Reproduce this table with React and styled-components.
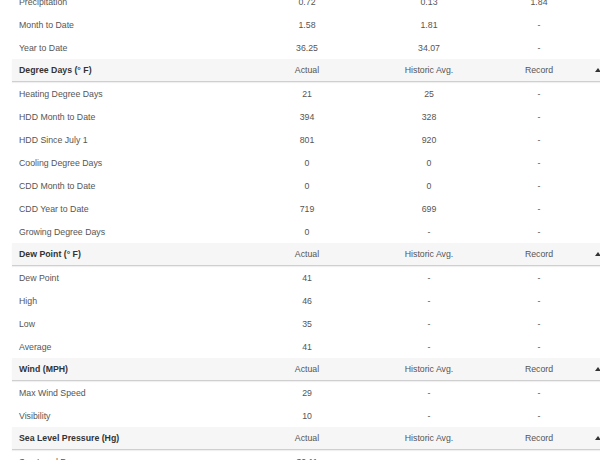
import styled, { createGlobalStyle } from 'styled-components'

const GlobalStyle = createGlobalStyle`
	html, body {
		margin: 0;
		padding: 0;
		background: #fff;
		overflow: hidden;
	}
	body {
		font-family: 'Liberation Sans', Arial, sans-serif;
	}
`

const secciones = [
	{
		titulo: null,
		filas: [
			['Precipitation', '0.72', '0.13', '1.84'],
			['Month to Date', '1.58', '1.81', '-'],
			['Year to Date', '36.25', '34.07', '-'],
		],
	},
	{
		titulo: 'Degree Days (° F)',
		filas: [
			['Heating Degree Days', '21', '25', '-'],
			['HDD Month to Date', '394', '328', '-'],
			['HDD Since July 1', '801', '920', '-'],
			['Cooling Degree Days', '0', '0', '-'],
			['CDD Month to Date', '0', '0', '-'],
			['CDD Year to Date', '719', '699', '-'],
			['Growing Degree Days', '0', '-', '-'],
		],
	},
	{
		titulo: 'Dew Point (° F)',
		filas: [
			['Dew Point', '41', '-', '-'],
			['High', '46', '-', '-'],
			['Low', '35', '-', '-'],
			['Average', '41', '-', '-'],
		],
	},
	{
		titulo: 'Wind (MPH)',
		filas: [
			['Max Wind Speed', '29', '-', '-'],
			['Visibility', '10', '-', '-'],
		],
	},
	{
		titulo: 'Sea Level Pressure (Hg)',
		filas: [['Sea Level Pressure', '30.11', '-', '-']],
	},
]

export default function App() {
	return (
		<>
			<GlobalStyle />
			<Tabla>
				{secciones.map((s, i) => (
					<Seccion key={i}>
						{s.titulo && (
							<Cabecera>
								<Etiqueta $bold>{s.titulo}</Etiqueta>
								<Celda>Actual</Celda>
								<Celda>Historic Avg.</Celda>
								<Celda>Record</Celda>
								<Flecha />
							</Cabecera>
						)}
						{s.filas.map((f, j) => (
							<Fila key={j}>
								<Etiqueta>{f[0]}</Etiqueta>
								<Celda>{f[1]}</Celda>
								<Celda>{f[2]}</Celda>
								<Celda>{f[3]}</Celda>
								<span />
							</Fila>
						))}
					</Seccion>
				))}
			</Tabla>
		</>
	)
}

const Tabla = styled.div`
	width: 596px;
	margin: -10px 0 0 12px;
	font-size: 8.75px;
	color: #555;
`

const Seccion = styled.section`
	display: flex;
	flex-direction: column;
`

const columnas = `
	display: grid;
	grid-template-columns: 234px 122px 122px 98px 20px;
	align-items: center;
`

const Fila = styled.div`
	${columnas}
	height: 23px;
`

const Cabecera = styled.div`
	${columnas}
	height: 22px;
	background: #f6f6f6;
	border-bottom: 1px solid #cfcfcf;
	box-shadow: 0 1px 1px rgba(0, 0, 0, 0.06);
`

const Etiqueta = styled.div`
	padding-left: 7px;
	font-weight: ${({ $bold }) => ($bold ? 700 : 400)};
	color: ${({ $bold }) => ($bold ? '#333' : '#555')};
	white-space: nowrap;
`

const Celda = styled.div`
	text-align: center;
	white-space: nowrap;
`

const Flecha = styled.span`
	justify-self: center;
	width: 0;
	height: 0;
	border-left: 3px solid transparent;
	border-right: 3px solid transparent;
	border-bottom: 4px solid #333;
`
